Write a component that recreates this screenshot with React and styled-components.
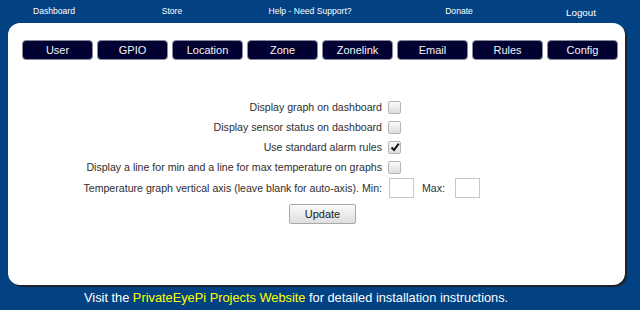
import React from "react";
import styled, { createGlobalStyle } from "styled-components";

const Global = createGlobalStyle`
  html, body {
    margin: 0;
    padding: 0;
    background: #024282;
    font-family: "Liberation Sans", Arial, sans-serif;
  }
`;

const Page = styled.div`
  width: 640px;
  height: 310px;
  background: #024282;
  overflow: hidden;
`;

const TopNav = styled.nav`
  display: grid;
  grid-template-columns: 108px 128px 148px 150px 94px;
  height: 23px;
  align-items: center;
`;

const NavLink = styled.a`
  color: #fff;
  text-decoration: none;
  text-align: center;
  font-size: ${(p) => (p.$big ? "9.8px" : "8.6px")};
  margin-top: ${(p) => (p.$big ? "3px" : "0")};
  margin-bottom: 2px;
`;

const Panel = styled.div`
  margin-left: 8px;
  width: 617px;
  height: 262px;
  background: #fff;
  border-radius: 12px;
  box-shadow: 2px 2px 0 #1c2230;
  padding: 17px 0 0 14px;
  box-sizing: border-box;
`;

const Tabs = styled.div`
  display: flex;
  gap: 4px;
`;

const Tab = styled.a`
  width: 71px;
  height: 20px;
  box-sizing: border-box;
  background: #020232;
  border: 1px solid #8a8a9a;
  border-radius: 4px;
  color: #f4f4f4;
  font-size: 11px;
  display: flex;
  align-items: center;
  justify-content: center;
  text-decoration: none;
`;

const Form = styled.div`
  display: grid;
  grid-template-columns: 302px auto;
  column-gap: 6px;
  margin: 37px 0 0 58px;
  font-size: 10.6px;
  color: #2e2e2e;
`;

const Label = styled.div`
  text-align: right;
  height: ${(p) => (p.$tall ? "22px" : "20px")};
  line-height: ${(p) => (p.$tall ? "22px" : "20px")};
  white-space: nowrap;
`;

const Control = styled.div`
  display: flex;
  align-items: center;
  gap: 8px;
  height: ${(p) => (p.$tall ? "22px" : "20px")};
`;

const Box = styled.span`
  width: 13px;
  height: 13px;
  box-sizing: border-box;
  border: 1px solid #b4b4b4;
  border-radius: 2px;
  background: linear-gradient(#fafafa, #dcdcdc);
  display: flex;
  align-items: center;
  justify-content: center;
`;

const TextBox = styled.span`
  display: block;
  width: 25px;
  height: 20px;
  box-sizing: border-box;
  border: 1px solid #c6c6c6;
  background: #fff;
  margin-left: ${(p) => p.$offset || 0}px;
`;

const ButtonRow = styled.div`
  grid-column: 1 / -1;
  padding: 5px 0 0 209px;
`;

const Button = styled.button`
  width: 67px;
  height: 20px;
  border: 1px solid #a9a9a9;
  border-radius: 2px;
  background: linear-gradient(#fafafa, #dedede);
  font-family: "Liberation Sans", Arial, sans-serif;
  font-size: 11px;
  color: #222;
  padding: 0;
`;

const Footer = styled.div`
  padding: 5px 0 0 84px;
  font-size: 12.8px;
  color: #fff;
  white-space: nowrap;
`;

const Yellow = styled.a`
  color: #ffff00;
  text-decoration: none;
`;

const Check = ({ checked }) => (
  <Box>
    {checked && (
      <svg width="10" height="10" viewBox="0 0 10 10">
        <path d="M1.5 5.5 L4 8 L8.8 1.6" fill="none" stroke="#111" strokeWidth="2" />
      </svg>
    )}
  </Box>
);

const tabs = ["User", "GPIO", "Location", "Zone", "Zonelink", "Email", "Rules", "Config"];

const options = [
  ["Display graph on dashboard", false],
  ["Display sensor status on dashboard", false],
  ["Use standard alarm rules", true],
  ["Display a line for min and a line for max temperature on graphs", false],
];

export default function App() {
  return (
    <Page>
      <Global />
      <TopNav>
        <NavLink>Dashboard</NavLink>
        <NavLink>Store</NavLink>
        <NavLink>Help - Need Support?</NavLink>
        <NavLink>Donate</NavLink>
        <NavLink $big>Logout</NavLink>
      </TopNav>
      <Panel>
        <Tabs>
          {tabs.map((t) => (
            <Tab key={t}>{t}</Tab>
          ))}
        </Tabs>
        <Form>
          {options.map(([text, checked]) => (
            <React.Fragment key={text}>
              <Label>{text}</Label>
              <Control>
                <Check checked={checked} />
              </Control>
            </React.Fragment>
          ))}
          <Label $tall>Temperature graph vertical axis (leave blank for auto-axis). Min:</Label>
          <Control $tall>
            <TextBox $offset={1} />
            <span>Max:</span>
            <TextBox $offset={2} />
          </Control>
          <ButtonRow>
            <Button>Update</Button>
          </ButtonRow>
        </Form>
      </Panel>
      <Footer>
        Visit the <Yellow>PrivateEyePi Projects Website</Yellow> for detailed installation instructions.
      </Footer>
    </Page>
  );
}
